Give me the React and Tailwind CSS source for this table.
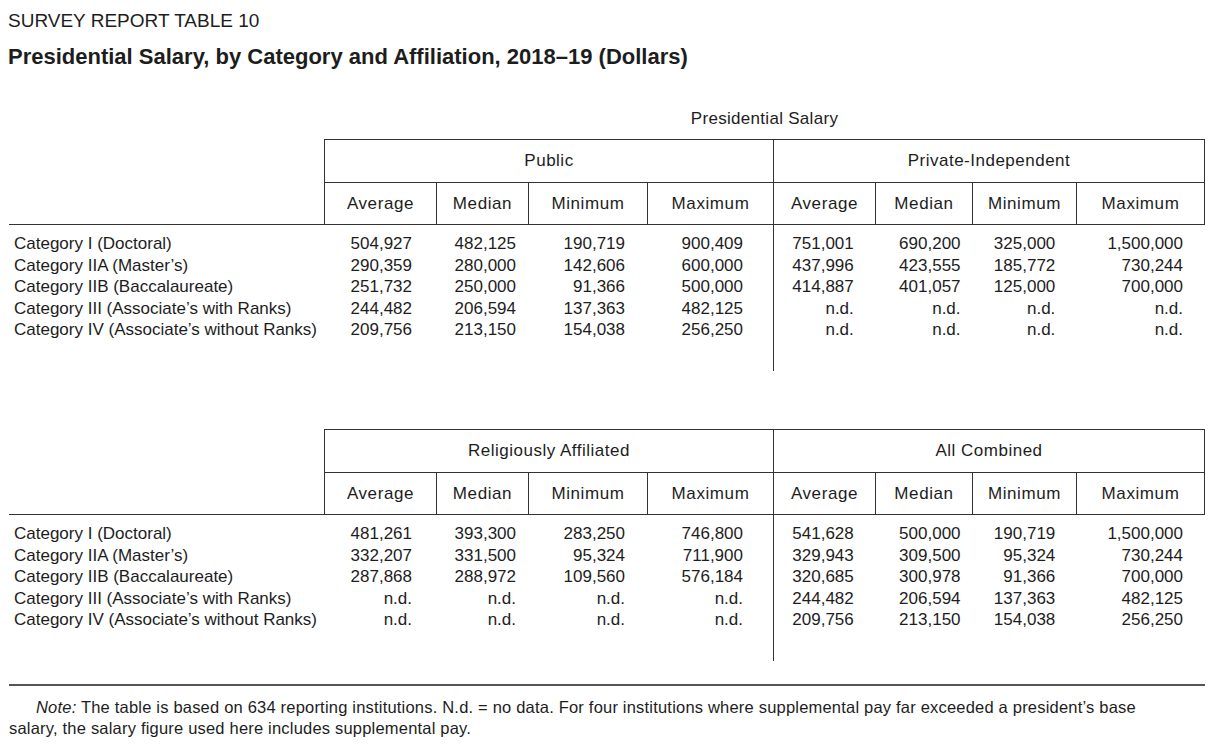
import React from "react";

const font = "font-['Liberation_Sans',Arial,sans-serif]";

const LABELS = [
  "Category I (Doctoral)",
  "Category IIA (Master’s)",
  "Category IIB (Baccalaureate)",
  "Category III (Associate’s with Ranks)",
  "Category IV (Associate’s without Ranks)",
];

const HEADS = ["Average", "Median", "Minimum", "Maximum"];

// column widths + right padding of the figures, per group
const LEFT_COLS = [
  { w: "w-[112px]", pr: "pr-[24px]" },
  { w: "w-[92px]", pr: "pr-[12px]" },
  { w: "w-[119px]", pr: "pr-[22px]" },
  { w: "w-[126px]", pr: "pr-[30px]" },
];
const RIGHT_COLS = [
  { w: "w-[102px]", pr: "pr-[22px]" },
  { w: "w-[97px]", pr: "pr-[12px]" },
  { w: "w-[104px]", pr: "pr-[21px]" },
  { w: "w-[128px]", pr: "pr-[21px]" },
];

const ND = ["n.d.", "n.d.", "n.d.", "n.d."];

const tables = [
  {
    left: "Public",
    right: "Private-Independent",
    leftRows: [
      ["504,927", "482,125", "190,719", "900,409"],
      ["290,359", "280,000", "142,606", "600,000"],
      ["251,732", "250,000", "91,366", "500,000"],
      ["244,482", "206,594", "137,363", "482,125"],
      ["209,756", "213,150", "154,038", "256,250"],
    ],
    rightRows: [
      ["751,001", "690,200", "325,000", "1,500,000"],
      ["437,996", "423,555", "185,772", "730,244"],
      ["414,887", "401,057", "125,000", "700,000"],
      ND,
      ND,
    ],
  },
  {
    left: "Religiously Affiliated",
    right: "All Combined",
    leftRows: [
      ["481,261", "393,300", "283,250", "746,800"],
      ["332,207", "331,500", "95,324", "711,900"],
      ["287,868", "288,972", "109,560", "576,184"],
      ND,
      ND,
    ],
    rightRows: [
      ["541,628", "500,000", "190,719", "1,500,000"],
      ["329,943", "309,500", "95,324", "730,244"],
      ["320,685", "300,978", "91,366", "700,000"],
      ["244,482", "206,594", "137,363", "482,125"],
      ["209,756", "213,150", "154,038", "256,250"],
    ],
  },
];

function GroupData({ cols, rows, divider }) {
  return (
    <div className={`flex h-full pt-[8px] ${divider ? "border-l border-[#333]" : ""}`}>
      {cols.map((c, ci) => (
        <div key={ci} className={`${c.w} ${c.pr} flex flex-col text-right`}>
          {rows.map((r, ri) => (
            <div key={ri} className="h-[21.5px] leading-[21.5px]">
              {r[ci]}
            </div>
          ))}
        </div>
      ))}
    </div>
  );
}

function SalaryTable({ t }) {
  return (
    <div>
      {/* ===== HEADER BOX ===== */}
      <div className="flex">
        <div className="w-[315px]" />
        <div className="flex flex-col border-t border-r border-[#333]">
          <div className="flex h-[43px] border-b border-[#333]">
            <div className="w-[449px] border-l border-[#333] flex items-center justify-center tracking-[0.5px]">
              {t.left}
            </div>
            <div className="w-[431px] border-l border-[#333] flex items-center justify-center tracking-[0.5px]">
              {t.right}
            </div>
          </div>
          <div className="flex h-[41px]">
            {[...LEFT_COLS, ...RIGHT_COLS].map((c, i) => (
              <div
                key={i}
                className={`${c.w} border-l border-[#333] flex items-center justify-center tracking-[0.6px]`}
              >
                {HEADS[i % 4]}
              </div>
            ))}
          </div>
        </div>
      </div>
      <div className="h-px w-[1196px] bg-[#333]" />

      {/* ===== BODY ===== */}
      <div className="flex h-[146px]">
        <div className="w-[315px] pl-[5px] pt-[8px] flex flex-col">
          {LABELS.map((l) => (
            <div key={l} className="h-[21.5px] leading-[21.5px] whitespace-nowrap">
              {l}
            </div>
          ))}
        </div>
        <div className="w-[449px]">
          <GroupData cols={LEFT_COLS} rows={t.leftRows} />
        </div>
        <div className="w-[431px]">
          <GroupData cols={RIGHT_COLS} rows={t.rightRows} divider />
        </div>
      </div>
    </div>
  );
}

export default function App() {
  return (
    <div className={`${font} w-[1220px] h-[746px] bg-white text-[#1d1d1d] text-[17px] pl-[8px] pt-[9px]`}>
      <div className="h-[24px] leading-[24px] text-[19px]">SURVEY REPORT TABLE 10</div>
      <div className="mt-[10px] h-[28px] leading-[28px] text-[22px] font-bold">
        Presidential Salary, by Category and Affiliation, 2018–19 (Dollars)
      </div>

      <div className="ml-px">
        <div className="flex mt-[36px] mb-[8px] h-[24px] leading-[24px]">
          <div className="w-[315px]" />
          <div className="w-[881px] text-center tracking-[0.3px]">Presidential Salary</div>
        </div>

        <SalaryTable t={tables[0]} />
        <div className="h-[58px]" />
        <SalaryTable t={tables[1]} />

        {/* ===== NOTE ===== */}
        <div className="mt-[23px] h-[2px] w-[1196px] bg-[#555]" />
        <p className="mt-[11px] w-[1196px] text-[16.5px] leading-[21px] indent-[27px] tracking-[0.2px]">
          <span className="italic">Note:</span> The table is based on 634 reporting institutions. N.d. = no data. For four institutions where supplemental pay far exceeded a president’s base
          <br />
          salary, the salary figure used here includes supplemental pay.
        </p>
      </div>
    </div>
  );
}
